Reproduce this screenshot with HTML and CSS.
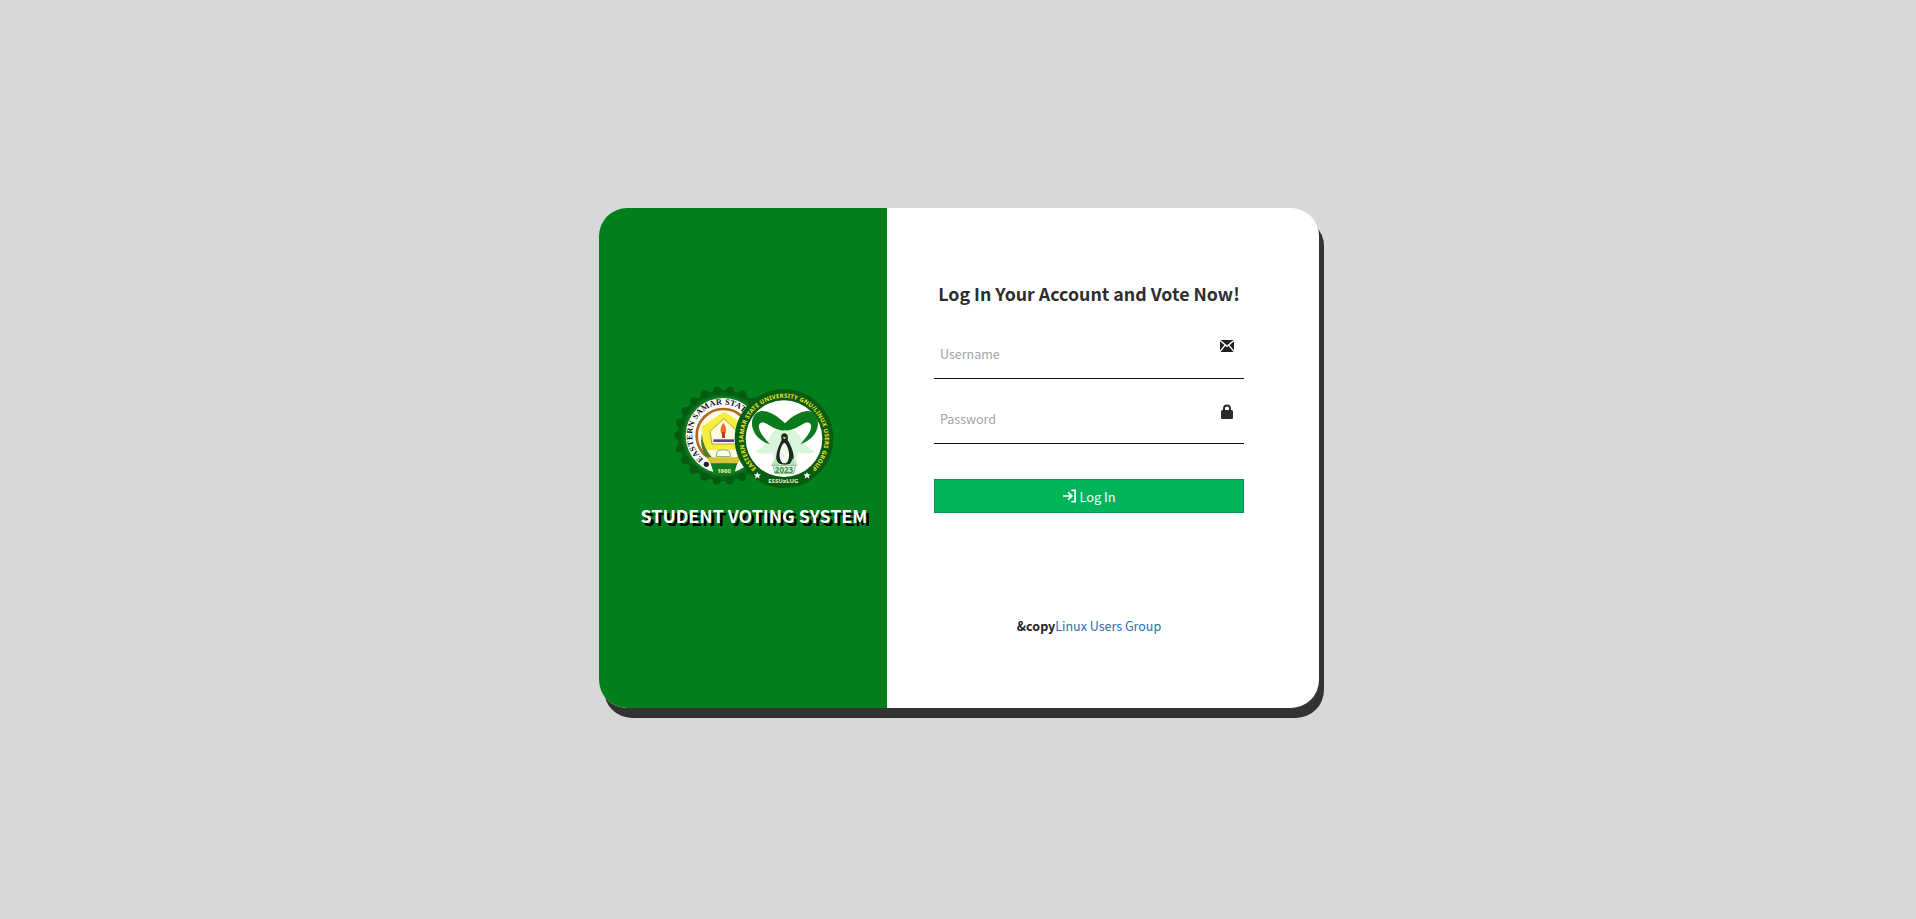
FILE: index.html
```html
<!DOCTYPE html>
<html lang="en">
<head>
<meta charset="utf-8">
<title>Student Voting System</title>
<link rel="stylesheet" href="styles.css">
</head>
<body>
<main class="card">
  <section class="brand">
    <svg class="logos" viewBox="42 36 492 324" width="164" height="108" aria-label="Logos">
      <defs>
        <path id="seal-arc" d="M131 267 A92 92 0 1 1 265 144"/>
        <path id="lug-arc" d="M289 295 A122 122 0 1 1 455 295"/>
        <radialGradient id="gear" cx="50%" cy="50%" r="50%">
          <stop offset="78%" stop-color="#15942c"/>
          <stop offset="90%" stop-color="#0a6a17"/>
          <stop offset="100%" stop-color="#035a0f"/>
        </radialGradient>
        <g id="horn">
          <path d="M120 85C100 65 75 48 50 48 26 50 16 78 23 100 30 124 50 140 74 148 62 132 46 118 42 98 40 86 48 80 60 84 78 92 96 108 120 106Z"/>
        </g>
      </defs>
      <g>
        <circle cx="190" cy="197" r="136" fill="url(#gear)" stroke="#045a10" stroke-width="24" stroke-dasharray="0 38.84" stroke-linecap="round"/>
        <circle cx="190" cy="197" r="113" fill="#fff"/>
        <text class="seal-text"><textPath href="#seal-arc" textLength="313" lengthAdjust="spacing">EASTERN SAMAR STATE</textPath></text>
        <circle cx="190" cy="197" r="80" fill="#fbfbe8" stroke="#b5651d" stroke-width="8"/>
        <path d="M192 125 262 170 246 240 134 240 124 170Z" fill="#f5ee3f"/>
        <path d="M192 146 232 184 226 222 156 222 150 184Z" fill="#fdfbe0" stroke="#b9a22a" stroke-width="3"/>
        <path d="M190 158C200 172 202 186 190 198 178 186 180 172 190 158Z" fill="#e8701f"/>
        <path d="M186 186H195V204H186Z" fill="#b8401f"/>
        <path d="M160 208H222V216H160Z" fill="#57408a"/>
        <path d="M126 190C128 224 142 250 162 268L148 270C128 252 118 224 126 190Z" fill="#47802a"/>
        <path d="M172 244C180 238 200 238 208 244L212 260H168Z" fill="#fff" stroke="#7fae5a" stroke-width="3"/>
        <path d="M138 262H244L232 282H152Z" fill="#d7c23a"/>
        <path d="M152 280H232L222 312H162Z" fill="#0d7f20"/>
        <text class="seal-year" x="192" y="308" text-anchor="middle">1960</text>
        <circle cx="139" cy="283" r="8" fill="#222"/>
      </g>
      <g>
        <circle cx="372" cy="206" r="148" fill="#075c10"/>
        <circle cx="372" cy="206" r="115" fill="#fff"/>
        <text class="lug-text"><textPath href="#lug-arc" textLength="584" lengthAdjust="spacing">EASTERN SAMAR STATE UNIVERSITY GNU/LINUX USERS GROUP</textPath></text>
        <g transform="translate(255 75)">
          <path d="M120 100C100 98 85 105 75 125 65 145 50 160 30 170 50 178 70 178 82 172L88 205H152L158 172C170 178 190 178 210 170 190 160 175 145 165 125 155 105 140 98 120 100Z" fill="#d9f6da"/>
          <use href="#horn" fill="#0b7a1c"/>
          <use href="#horn" fill="#0b7a1c" transform="translate(240 0) scale(-1 1)"/>
          <path d="M118 115C127 115 131 124 128 135 140 155 150 180 145 200 135 212 105 212 95 200 90 180 100 155 110 135 106 124 110 115 118 115Z" fill="#1c2a20"/>
          <path d="M118 143C125 146 134 168 132 186 130 198 126 205 118 205 110 205 106 198 104 186 102 168 111 146 118 143Z" fill="#f0faee"/>
          <path d="M112 126H124L118 133Z" fill="#e7c94a"/>
          <path d="M92 190 76 212H104ZM144 190 160 212H132Z" fill="#b6e5b4"/>
          <path d="M84 211H152L146 236H90Z" fill="#d9f6da" stroke="#7fb07d" stroke-width="2.500"/>
        </g>
        <text class="lug-year" x="372" y="308" text-anchor="middle">2023</text>
        <path class="star" d="M292 306 295 313 303 313 297 318 299 326 292 321 285 326 287 318 281 313 289 313Z"/>
        <path class="star" d="M441 306 444 313 452 313 446 318 448 326 441 321 434 326 436 318 430 313 438 313Z"/>
        <text class="lug-name" x="370" y="339" text-anchor="middle">ESSUxLUG</text>
      </g>
    </svg>
    <h1 class="brand-title">STUDENT VOTING SYSTEM</h1>
  </section>
  <section class="panel">
    <h2 class="heading">Log In Your Account and Vote Now!</h2>
    <form class="form">
      <div class="field">
        <input class="input" type="text" placeholder="Username">
        <svg class="field-icon" viewBox="0 0 14 12" width="14" height="12" aria-hidden="true">
          <path d="M0 0H14V12H0Z" fill="#1f1f1f"/>
          <path d="M0 .4 7 6.4 14 .4M0 11.600 5 5.400M14 11.600 9 5.400" fill="none" stroke="#fff" stroke-width="1.400"/>
        </svg>
      </div>
      <div class="field">
        <input class="input" type="password" placeholder="Password">
        <svg class="field-icon field-icon-lock" viewBox="0 0 14 15" width="14" height="15" aria-hidden="true">
          <path d="M4 7V4.500a3 3 0 0 1 6 0V7" fill="none" stroke="#2b2b2b" stroke-width="2"/>
          <rect x="1" y="6" width="12" height="9" rx="1.500" fill="#2b2b2b"/>
        </svg>
      </div>
      <button class="submit" type="button">
        <svg viewBox="0 0 16 15" width="15" height="14" aria-hidden="true">
          <path d="M1 7.500H9.500M6.500 3.500 10.500 7.500 6.500 11.500" fill="none" stroke="#fff" stroke-width="1.800"/>
          <path d="M10 1.500H14V13.500H10" fill="none" stroke="#fff" stroke-width="1.800"/>
        </svg>
        <span>Log In</span>
      </button>
    </form>
    <p class="credit"><strong>&amp;copy</strong><a href="#">Linux Users Group</a></p>
  </section>
</main>
</body>
</html>
```
FILE: styles.css
```css
* { box-sizing: border-box; }
html, body { height: 100%; }
body {
  margin: 0;
  background: #d8d8d8;
  display: flex;
  align-items: center;
  justify-content: center;
  padding: 0 0 3px 2px;
  font-family: "Noto Sans CJK SC", "Noto Sans", sans-serif;
  color: #2d2d2d;
}
.card {
  width: 720px;
  height: 500px;
  display: flex;
  background: #fff;
  border-radius: 28px;
  box-shadow: 5px 10px 0 #333;
  overflow: hidden;
}
.brand {
  width: 288px;
  flex: none;
  background: #007f1c;
  display: flex;
  flex-direction: column;
  align-items: center;
  padding: 174px 0 0 22px;
}
.logos { display: block; margin-left: 4px; }
.brand-title {
  margin: 10px 0 0;
  color: #fff;
  font-size: 17.800px;
  line-height: 30px;
  font-weight: 700;
  white-space: nowrap;
  text-shadow: 3px 3px 0 #000;
}
.seal-text { font: 700 25px "Liberation Serif", serif; fill: #111; }
.seal-year { font: 700 18px "Noto Sans", sans-serif; fill: #f7efa0; }
.lug-text { font: 700 18px "Noto Sans", sans-serif; fill: #f3e32b; }
.lug-year { font: 700 24px "Noto Sans", sans-serif; fill: #3f8a45; }
.lug-name { font: 700 18px "Noto Sans", sans-serif; fill: #e8f7d0; }
.star { fill: #fff; }
.panel {
  flex: 1;
  min-width: 0;
  padding: 69px 75px 0 47px;
  display: flex;
  flex-direction: column;
}
.heading {
  margin: 0;
  font-size: 17.800px;
  line-height: 32px;
  font-weight: 700;
  text-align: center;
  white-space: nowrap;
}
.form { display: flex; flex-direction: column; margin-top: 5px; }
.field {
  position: relative;
  height: 65px;
  padding-top: 16px;
}
.input {
  display: block;
  width: 100%;
  height: 49px;
  border: 0;
  border-bottom: 1px solid #111;
  padding: 8px 6px 10px;
  outline: 0;
  background: transparent;
  font-family: inherit;
  font-size: 12.500px;
  color: #2d2d2d;
}
.input::placeholder { color: #a4a4a4; opacity: 1; }
.field-icon { position: absolute; top: 26px; right: 10px; }
.field-icon-lock { top: 25px; }
.submit {
  margin-top: 35px;
  height: 34px;
  display: flex;
  align-items: center;
  justify-content: center;
  gap: 2px;
  background: #00b45c;
  border: 1px solid #0b8f4d;
  color: #fff;
  font-family: inherit;
  font-size: 12.800px;
  padding: 0;
}
.credit {
  margin: 101px 0 0;
  font-size: 12.500px;
  line-height: 24px;
  text-align: center;
}
.credit strong { color: #222; }
.credit a { color: #2b6cb8; text-decoration: none; }
```
